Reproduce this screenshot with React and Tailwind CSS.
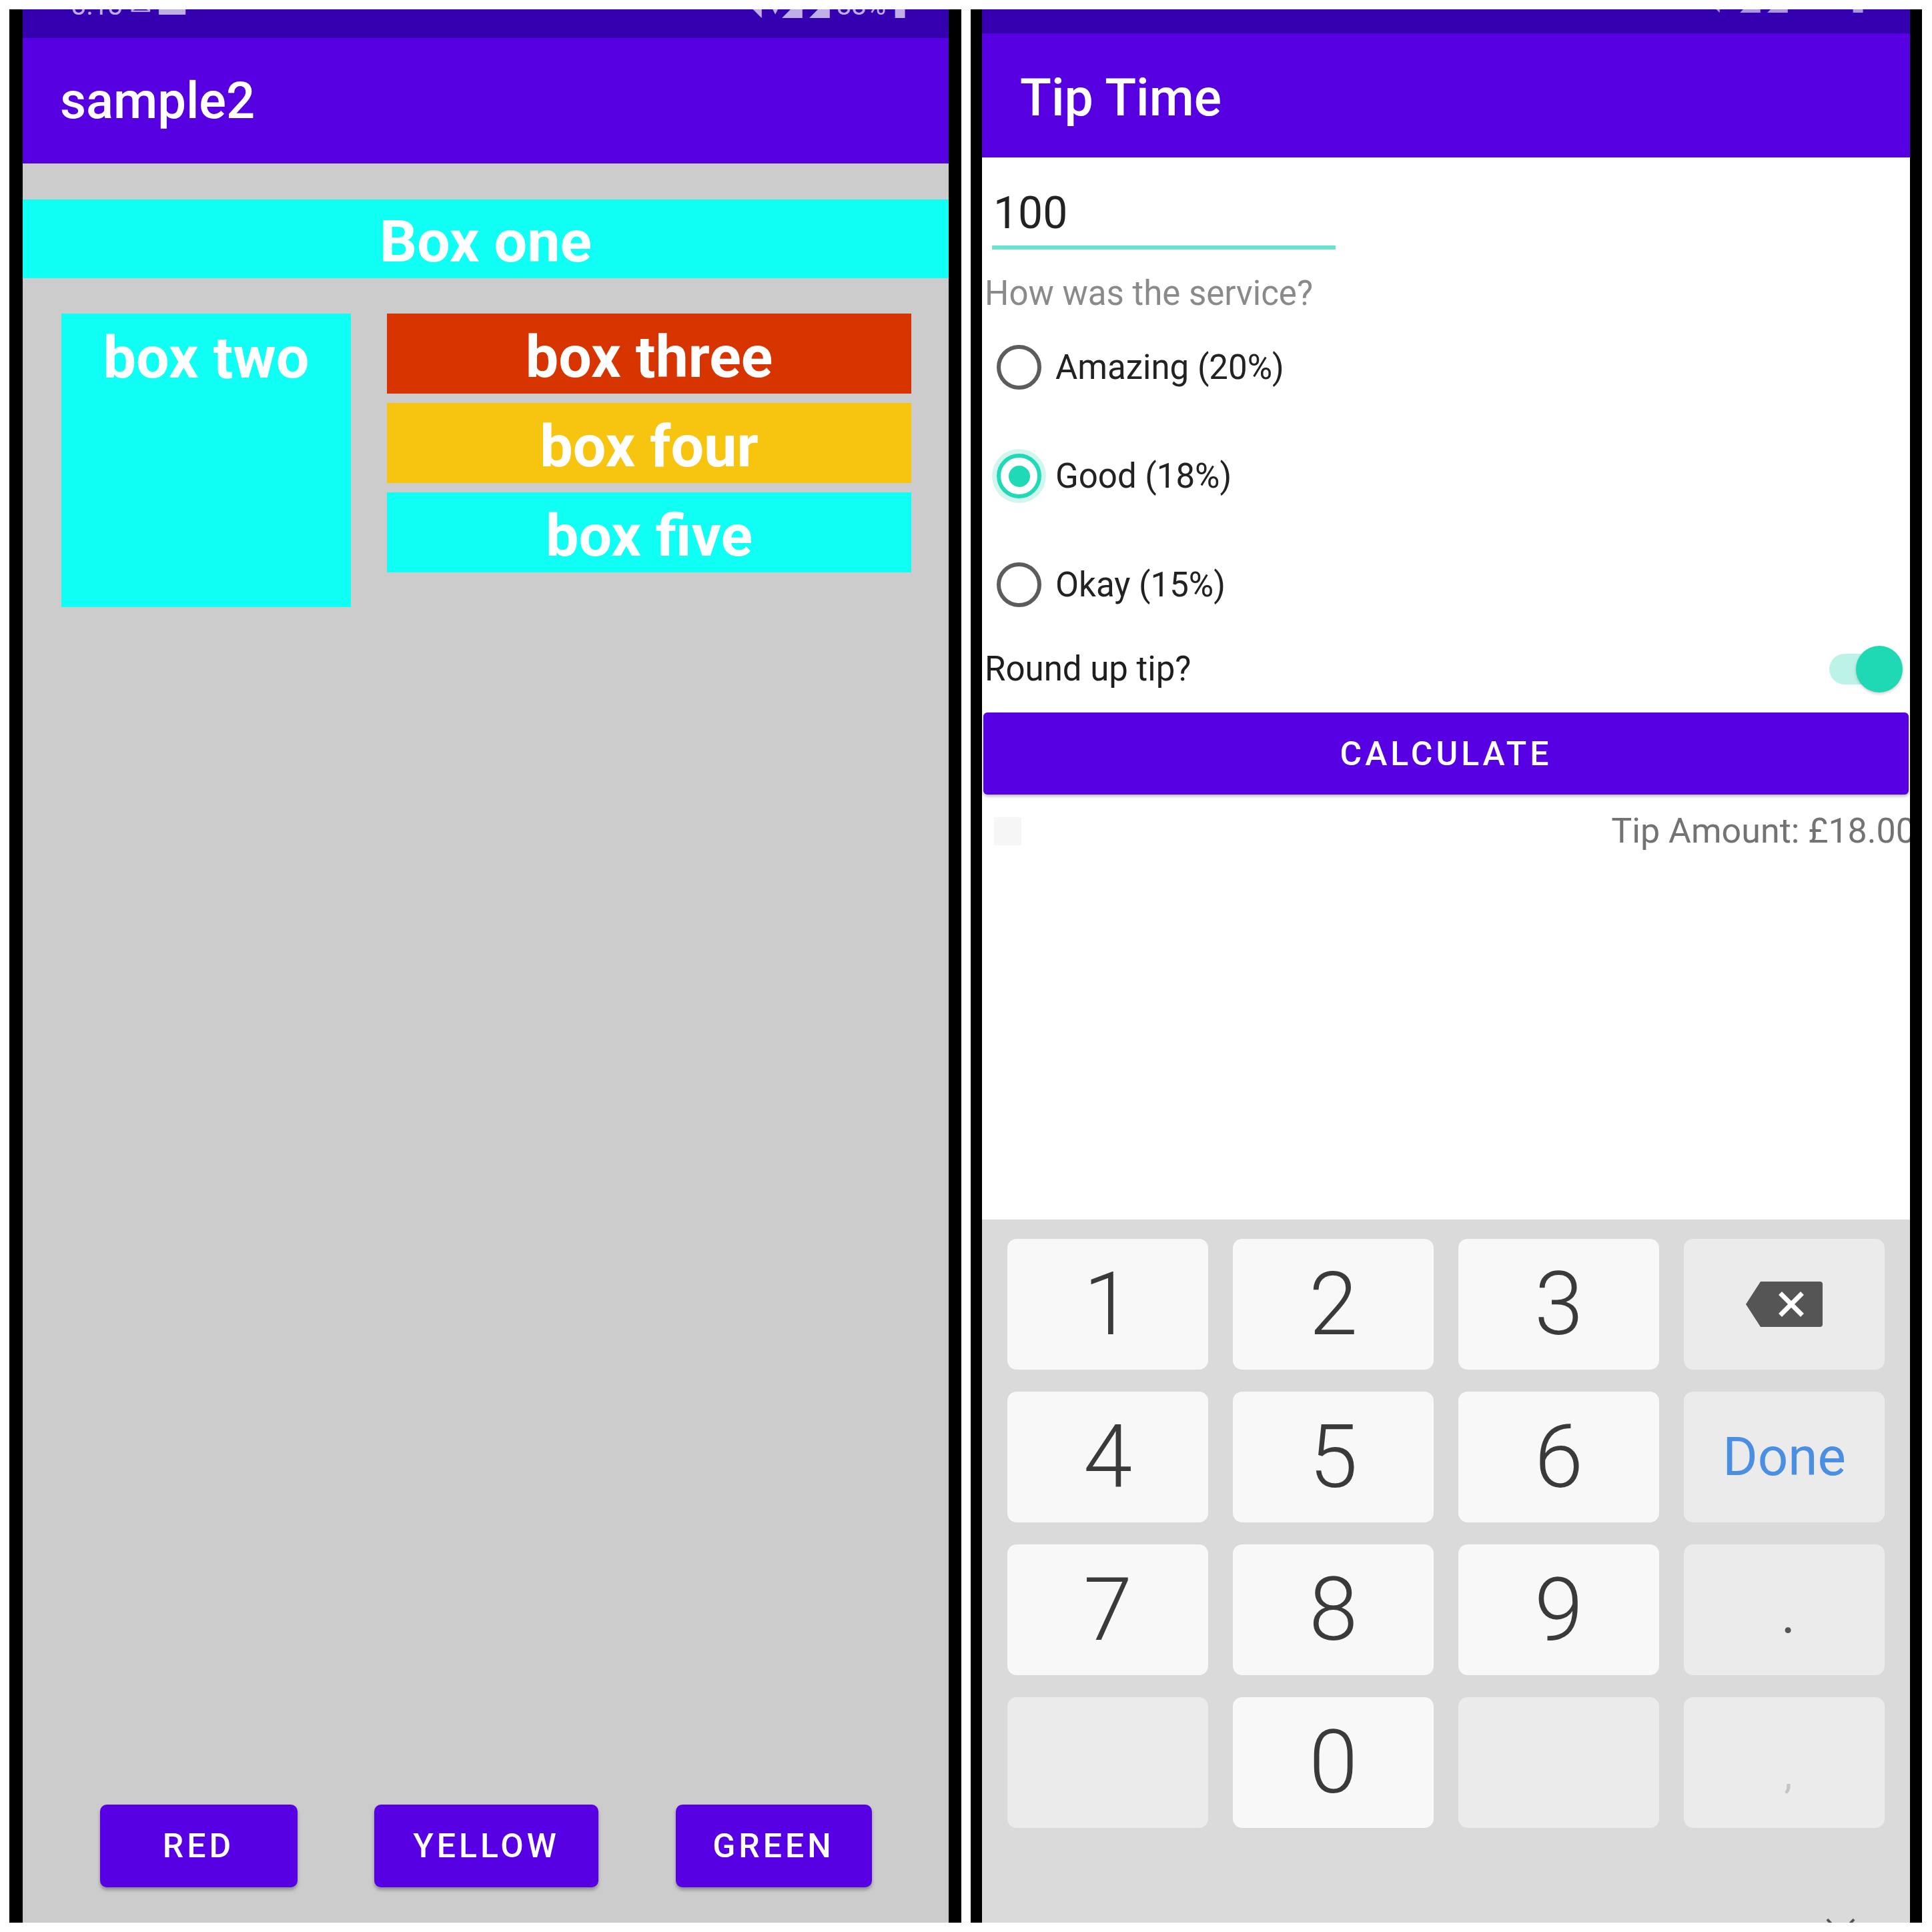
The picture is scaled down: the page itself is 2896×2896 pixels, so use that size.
import React from "react";

function Radio({ checked }) {
  if (checked) {
    return (
      <div className="w-[67px] h-[67px] shrink-0 rounded-full border-[6px] border-[#20d9b7] flex items-center justify-center shadow-[0_0_0_7px_#d2f6ee]">
        <div className="w-[32px] h-[32px] rounded-full bg-[#20d9b7]" />
      </div>
    );
  }
  return <div className="w-[67px] h-[67px] shrink-0 rounded-full border-[6px] border-[#5c5c5c]" />;
}

function RadioRow({ label, checked }) {
  return (
    <div className="h-[163px] flex items-center pl-[22px] gap-[21px]">
      <Radio checked={checked} />
      <span className="text-[51px] leading-[58px] text-[#222222]">{label}</span>
    </div>
  );
}

function Key({ children, special }) {
  return (
    <div
      className={
        "h-[196px] rounded-[14px] flex items-center justify-center " +
        (special ? "bg-[#ebebeb]" : "bg-[#f8f8f8]")
      }
    >
      {children}
    </div>
  );
}

function Digit({ d }) {
  return (
    <Key>
      <span className="text-[132px] leading-none font-light text-[#3a3a3a]">{d}</span>
    </Key>
  );
}

function Backspace() {
  return (
    <svg width="115" height="68" viewBox="0 0 115 68">
      <path d="M22 0 H111 a4 4 0 0 1 4 4 V64 a4 4 0 0 1 -4 4 H22 L0 34 Z" fill="#555555" />
      <path d="M54 20 L82 48 M82 20 L54 48" stroke="#ffffff" strokeWidth="7" strokeLinecap="square" />
    </svg>
  );
}

function PurpleButton({ label, w }) {
  return (
    <div
      className={
        w +
        " h-[124px] rounded-[10px] bg-[#5700e3] shadow-[0_4px_5px_rgba(0,0,0,0.3)] flex items-center justify-center"
      }
    >
      <span className="text-white text-[50px] font-medium tracking-[0.1em] leading-none">{label}</span>
    </div>
  );
}

export default function App() {
  return (
    <div className="w-[2896px] h-[2896px] bg-white flex pt-[14px] pl-[14px] [font-family:Roboto,'Noto_Sans',sans-serif]">
      {/* LEFT PHONE */}
      <div className="w-[1427px] h-[2868px] border-l-[20px] border-r-[19px] border-black bg-[#cccccc] flex flex-col overflow-hidden">
        <div className="h-[43px] shrink-0 bg-[#3400b0] overflow-hidden">
          <div className="-mt-[25px] flex justify-between pl-[73px] pr-[62px] text-[40px] leading-[40px] text-white/70">
            <span>3:13 ✉ ▬</span>
            <span>◥ ▾◢ ◢ 88% ▮</span>
          </div>
        </div>
        <div className="h-[188px] shrink-0 bg-[#5600e2] flex items-center pl-[56px]">
          <span className="text-white text-[76px] font-medium">sample2</span>
        </div>
        <div className="flex-1 flex flex-col">
          <div className="mt-[54px] h-[118px] bg-[#10fff4] flex items-center justify-center pt-[8px]">
            <span className="text-white font-bold text-[88px] leading-none">Box one</span>
          </div>
          <div className="mt-[53px] flex pl-[58px]">
            <div className="w-[434px] h-[440px] bg-[#10fff4] flex justify-center pt-[14px]">
              <span className="text-white font-bold text-[88px] leading-[103px]">box two</span>
            </div>
            <div className="ml-[54px] w-[786px] flex flex-col gap-[14px]">
              <div className="h-[120px] bg-[#d83400] flex items-center justify-center pt-[10px]">
                <span className="text-white font-bold text-[88px] leading-none">box three</span>
              </div>
              <div className="h-[120px] bg-[#f7c410] flex items-center justify-center pt-[10px]">
                <span className="text-white font-bold text-[88px] leading-none">box four</span>
              </div>
              <div className="h-[120px] bg-[#10fff4] flex items-center justify-center pt-[10px]">
                <span className="text-white font-bold text-[88px] leading-none">box five</span>
              </div>
            </div>
          </div>
          <div className="flex-1" />
          <div className="flex justify-evenly mb-[53px]">
            <PurpleButton label="RED" w="w-[296px]" />
            <PurpleButton label="YELLOW" w="w-[336px]" />
            <PurpleButton label="GREEN" w="w-[294px]" />
          </div>
        </div>
      </div>

      {/* RIGHT PHONE */}
      <div className="ml-[14px] w-[1426px] h-[2868px] border-l-[17px] border-r-[18px] border-black bg-white flex flex-col overflow-hidden">
        <div className="h-[36px] shrink-0 bg-[#3400b0] overflow-hidden">
          <div className="-mt-[33px] flex justify-between pl-[83px] pr-[67px] text-[40px] leading-[40px] text-white/60">
            <span>3:13 ✉</span>
            <span>◥ ▾◢ ◢ 88% ▮</span>
          </div>
        </div>
        <div className="h-[186px] shrink-0 bg-[#5600e2] flex items-center pl-[57px] pt-[10px]">
          <span className="text-white text-[77px] font-medium">Tip Time</span>
        </div>

        <div className="h-[1592px] shrink-0 flex flex-col">
          <div className="ml-[15px] w-[515px] mt-[45px] flex flex-col">
            <span className="text-[66px] leading-[77px] text-[#222222] pl-[2px]">100</span>
            <div className="mt-[10px] h-[6px] bg-[#69e3d0]" />
          </div>
          <span className="ml-[4px] mt-[37px] text-[51px] leading-[58px] text-[#8a8a8a]">How was the service?</span>
          <RadioRow label="Amazing (20%)" />
          <RadioRow label="Good (18%)" checked />
          <RadioRow label="Okay (15%)" />
          <div className="h-[90px] flex items-center justify-between">
            <span className="ml-[4px] text-[51px] leading-[58px] text-[#1e1e1e]">Round up tip?</span>
            <div className="mr-[11px] relative w-[110px] h-[70px] flex items-center">
              <div className="w-[100px] h-[46px] rounded-full bg-[#bdf2e8]" />
              <div className="absolute right-0 top-0 w-[70px] h-[70px] rounded-full bg-[#1fd9b5] shadow-[0_2px_4px_rgba(0,0,0,0.2)]" />
            </div>
          </div>
          <div className="mt-[20px] mx-[2px] h-[123px] rounded-[6px] bg-[#5700e3] shadow-[0_3px_4px_rgba(0,0,0,0.25)] flex items-center justify-center">
            <span className="text-white text-[50px] font-medium tracking-[0.1em] leading-none">CALCULATE</span>
          </div>
          <div className="mt-[26px] flex items-center justify-between">
            <div className="ml-[18px] w-[41px] h-[42px] bg-[#f6f6f6]" />
            <span className="-mr-[8px] text-[52px] leading-[58px] text-[#737373] whitespace-nowrap">Tip Amount: £18.00</span>
          </div>
        </div>

        <div className="flex-1 bg-[#dadada] flex flex-col pt-[29px] px-[38px] overflow-hidden">
          <div className="grid grid-cols-4 gap-x-[37px] gap-y-[33px]">
            <Digit d="1" />
            <Digit d="2" />
            <Digit d="3" />
            <Key special>
              <Backspace />
            </Key>
            <Digit d="4" />
            <Digit d="5" />
            <Digit d="6" />
            <Key special>
              <span className="text-[80px] leading-none text-[#4a8fe3]">Done</span>
            </Key>
            <Digit d="7" />
            <Digit d="8" />
            <Digit d="9" />
            <Key special>
              <span className="text-[80px] leading-none text-[#555555] pt-[16px] pl-[12px]">.</span>
            </Key>
            <Key special />
            <Digit d="0" />
            <Key special />
            <Key special>
              <span className="text-[60px] leading-none text-[#c4c4c4] pt-[36px] pl-[12px]">,</span>
            </Key>
          </div>
          <div className="mt-auto flex justify-end pr-[43px]">
            <svg width="46" height="30" viewBox="0 0 46 30" className="-mb-[22px]">
              <path d="M3 3 L23 25 L43 3" stroke="#555555" strokeWidth="4" fill="none" />
            </svg>
          </div>
        </div>
      </div>
    </div>
  );
}
